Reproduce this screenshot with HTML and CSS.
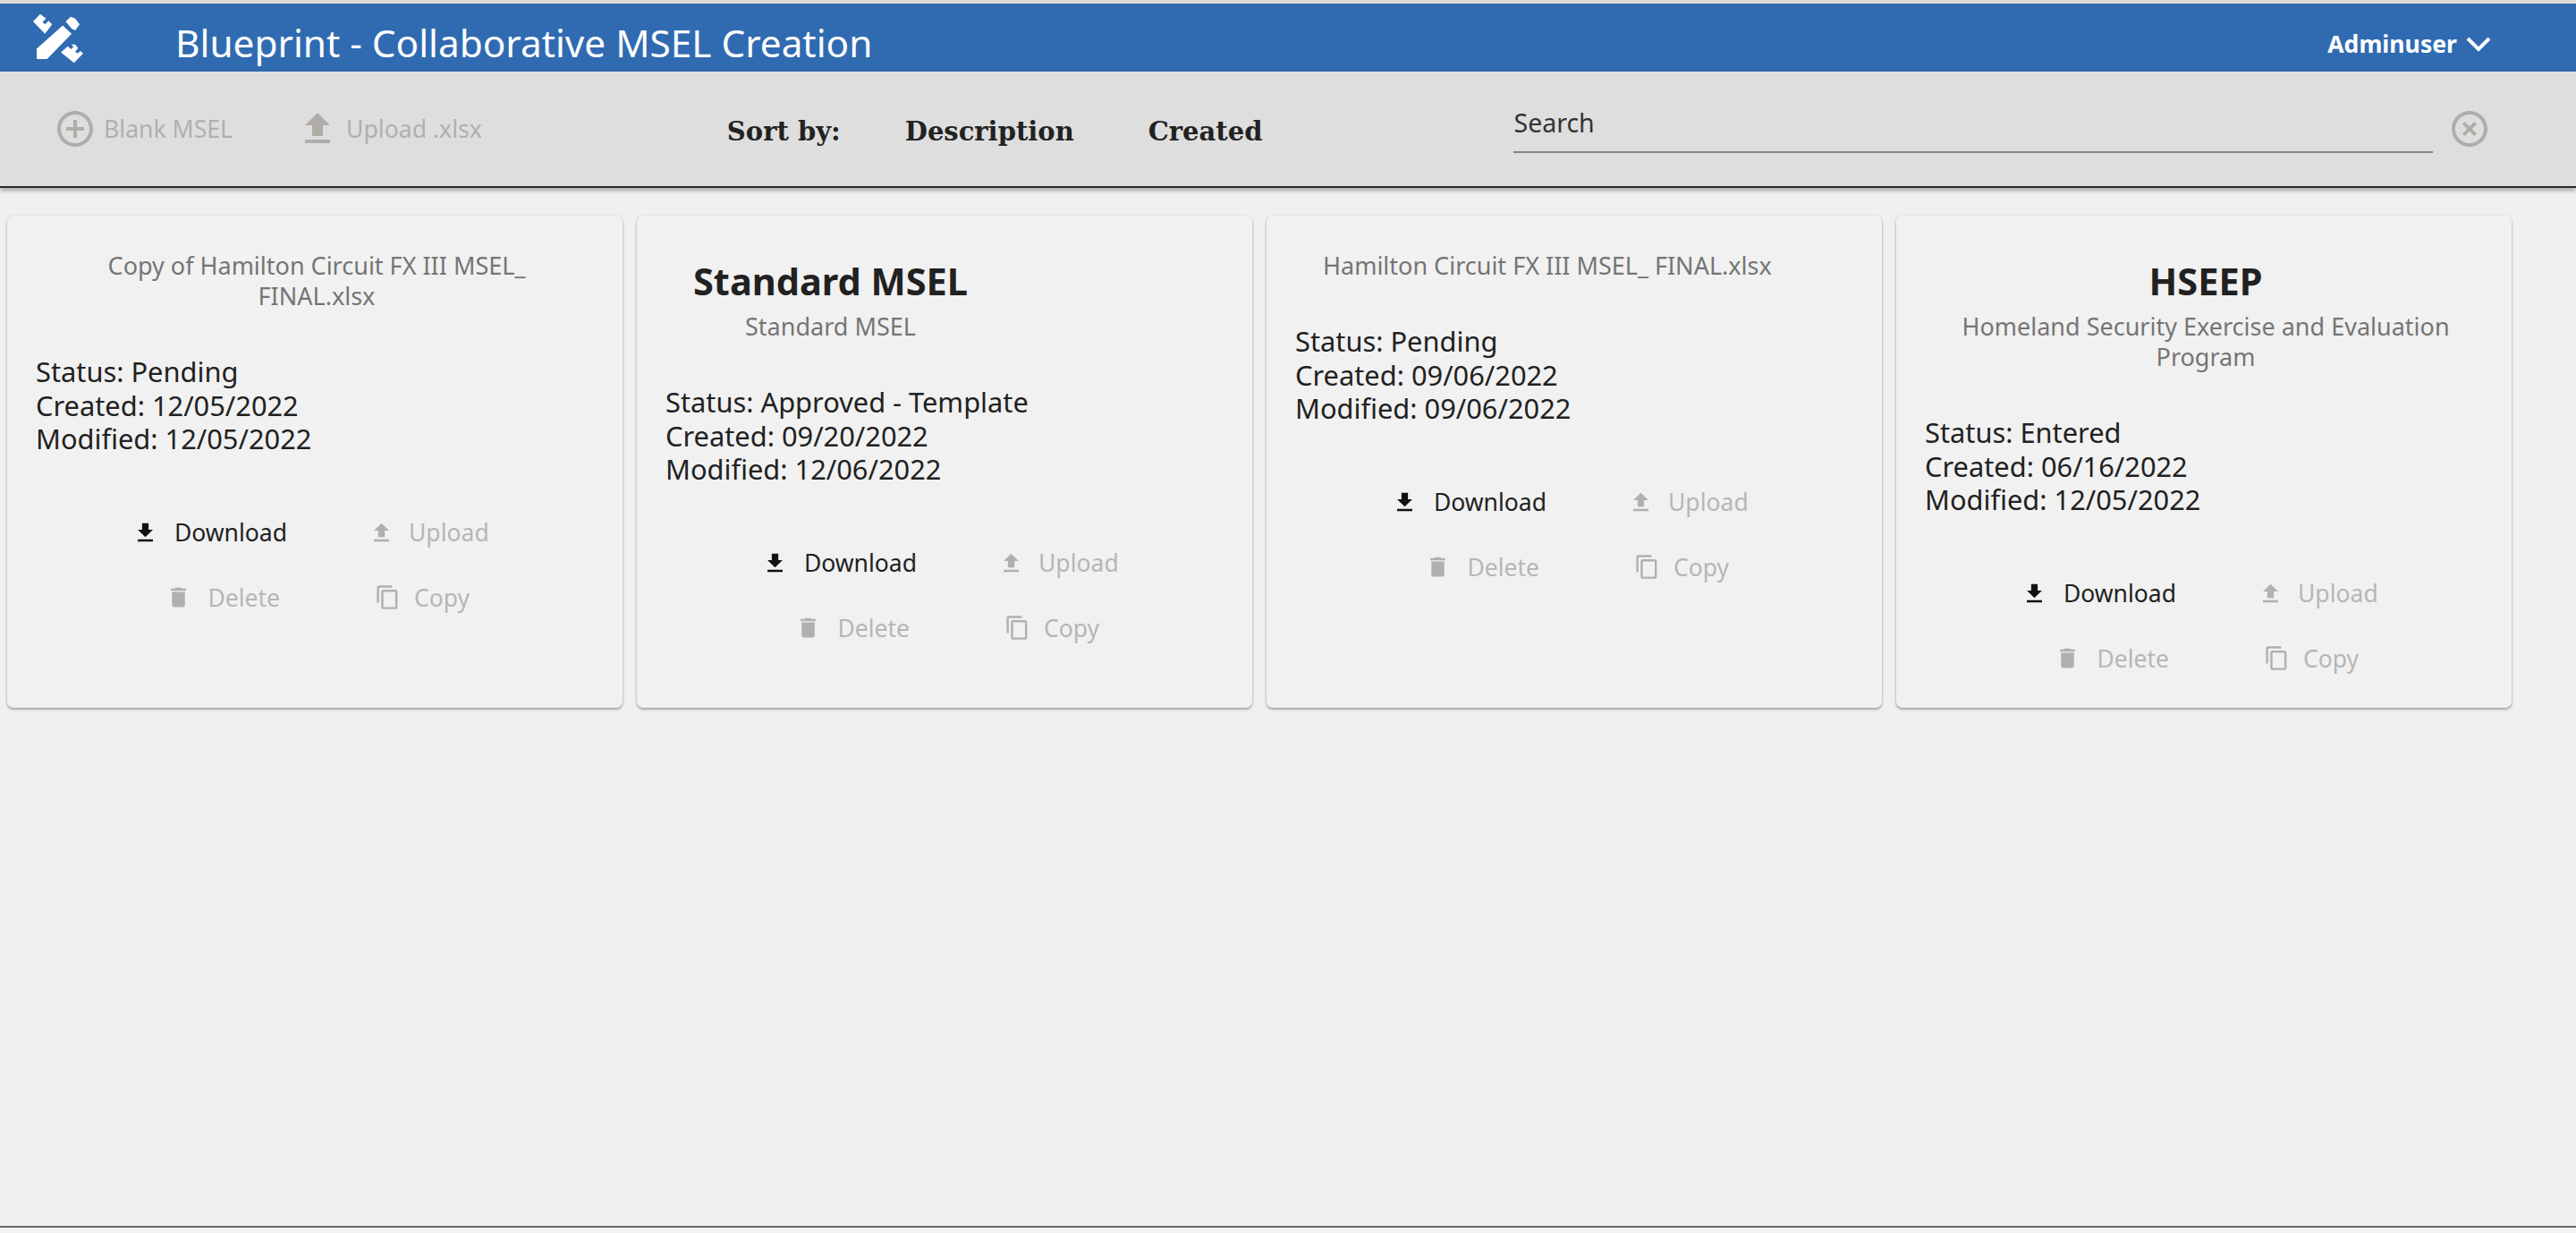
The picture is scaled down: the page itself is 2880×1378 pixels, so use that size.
FILE: index.html
```html
<!DOCTYPE html>
<html lang="en">
<head>
<meta charset="utf-8">
<title>Blueprint - Collaborative MSEL Creation</title>
<link rel="stylesheet" href="styles.css">
</head>
<body>
<div class="page">
  <header class="appbar">
    <svg class="logo" viewBox="45 38 172 172" aria-hidden="true">
      <path d="M48 68 72 43 92 58 80 70 88 78 100 66 112 78 88 110Z"/>
      <path d="M158 68 175 52 190 58 205 78 190 98 178 92Z"/>
      <path d="M60 195 60 160 148 82 178 110 95 195Z"/>
      <path d="M142 172 165 152 176 162 184 154 178 146 190 146 200 158 190 170 198 176 208 168 217 176 186 208Z"/>
    </svg>
    <div class="apptitle">Blueprint - Collaborative MSEL Creation</div>
    <div class="user"><span>Adminuser</span>
      <svg class="chev" viewBox="0 0 28 18" aria-hidden="true"><path d="M2 3 14 15 26 3"/></svg>
    </div>
  </header>
  <div class="toolbar">
    <div class="tool tool-blank">
      <svg class="icon-lg" viewBox="0 0 24 24"><path d="M13 7h-2v4H7v2h4v4h2v-4h4v-2h-4V7zm-1-5C6.48 2 2 6.48 2 12s4.48 10 10 10 10-4.48 10-10S17.52 2 12 2zm0 18c-4.41 0-8-3.59-8-8s3.59-8 8-8 8 3.59 8 8-3.59 8-8 8z"/></svg>
      <span>Blank MSEL</span>
    </div>
    <div class="tool tool-upload">
      <svg class="icon-lg" viewBox="0 0 24 24"><path d="M9 16h6v-6h4l-7-7-7 7h4zm-4 2h14v2H5z"/></svg>
      <span>Upload .xlsx</span>
    </div>
    <div class="sort">
      <span class="sort-label">Sort by:</span>
      <span class="sort-desc">Description</span>
      <span class="sort-created">Created</span>
    </div>
    <div class="search"><span>Search</span></div>
    <svg class="clear" viewBox="0 0 24 24"><path d="M14.59 8L12 10.59 9.41 8 8 9.41 10.59 12 8 14.59 9.41 16 12 13.41 14.59 16 16 14.59 13.41 12 16 9.41 14.59 8zM12 2C6.47 2 2 6.47 2 12s4.47 10 10 10 10-4.47 10-10S17.53 2 12 2zm0 18c-4.41 0-8-3.59-8-8s3.59-8 8-8 8 3.59 8 8-3.59 8-8 8z"/></svg>
  </div>
  <main class="cards">
    <article class="card">
      <div class="head">
        <div class="sub">Copy of Hamilton Circuit FX III MSEL_ FINAL.xlsx</div>
      </div>
      <div class="meta"><div>Status: Pending</div><div>Created: 12/05/2022</div><div>Modified: 12/05/2022</div></div>
      <div class="actions">
        <div class="act act-on"><svg viewBox="0 0 24 24"><path d="M19 9h-4V3H9v6H5l7 7 7-7zM5 18v2h14v-2H5z"/></svg><span>Download</span></div>
        <div class="act act-up"><svg viewBox="0 0 24 24"><path d="M9 16h6v-6h4l-7-7-7 7h4zm-4 2h14v2H5z"/></svg><span>Upload</span></div>
        <div class="act act-del"><svg viewBox="0 0 24 24"><path d="M6 19c0 1.1.9 2 2 2h8c1.1 0 2-.9 2-2V7H6v12zM19 4h-3.5l-1-1h-5l-1 1H5v2h14V4z"/></svg><span>Delete</span></div>
        <div class="act act-copy"><svg viewBox="0 0 24 24"><path d="M16 1H4c-1.1 0-2 .9-2 2v14h2V3h12V1zm3 4H8c-1.1 0-2 .9-2 2v14c0 1.1.9 2 2 2h11c1.1 0 2-.9 2-2V7c0-1.1-.9-2-2-2zm0 16H8V7h11v14z"/></svg><span>Copy</span></div>
      </div>
    </article>
    <article class="card">
      <div class="head">
        <div class="name">Standard MSEL</div>
        <div class="sub">Standard MSEL</div>
      </div>
      <div class="meta"><div>Status: Approved - Template</div><div>Created: 09/20/2022</div><div>Modified: 12/06/2022</div></div>
      <div class="actions">
        <div class="act act-on"><svg viewBox="0 0 24 24"><path d="M19 9h-4V3H9v6H5l7 7 7-7zM5 18v2h14v-2H5z"/></svg><span>Download</span></div>
        <div class="act act-up"><svg viewBox="0 0 24 24"><path d="M9 16h6v-6h4l-7-7-7 7h4zm-4 2h14v2H5z"/></svg><span>Upload</span></div>
        <div class="act act-del"><svg viewBox="0 0 24 24"><path d="M6 19c0 1.1.9 2 2 2h8c1.1 0 2-.9 2-2V7H6v12zM19 4h-3.5l-1-1h-5l-1 1H5v2h14V4z"/></svg><span>Delete</span></div>
        <div class="act act-copy"><svg viewBox="0 0 24 24"><path d="M16 1H4c-1.1 0-2 .9-2 2v14h2V3h12V1zm3 4H8c-1.1 0-2 .9-2 2v14c0 1.1.9 2 2 2h11c1.1 0 2-.9 2-2V7c0-1.1-.9-2-2-2zm0 16H8V7h11v14z"/></svg><span>Copy</span></div>
      </div>
    </article>
    <article class="card">
      <div class="head">
        <div class="sub">Hamilton Circuit FX III MSEL_ FINAL.xlsx</div>
      </div>
      <div class="meta"><div>Status: Pending</div><div>Created: 09/06/2022</div><div>Modified: 09/06/2022</div></div>
      <div class="actions">
        <div class="act act-on"><svg viewBox="0 0 24 24"><path d="M19 9h-4V3H9v6H5l7 7 7-7zM5 18v2h14v-2H5z"/></svg><span>Download</span></div>
        <div class="act act-up"><svg viewBox="0 0 24 24"><path d="M9 16h6v-6h4l-7-7-7 7h4zm-4 2h14v2H5z"/></svg><span>Upload</span></div>
        <div class="act act-del"><svg viewBox="0 0 24 24"><path d="M6 19c0 1.1.9 2 2 2h8c1.1 0 2-.9 2-2V7H6v12zM19 4h-3.5l-1-1h-5l-1 1H5v2h14V4z"/></svg><span>Delete</span></div>
        <div class="act act-copy"><svg viewBox="0 0 24 24"><path d="M16 1H4c-1.1 0-2 .9-2 2v14h2V3h12V1zm3 4H8c-1.1 0-2 .9-2 2v14c0 1.1.9 2 2 2h11c1.1 0 2-.9 2-2V7c0-1.1-.9-2-2-2zm0 16H8V7h11v14z"/></svg><span>Copy</span></div>
      </div>
    </article>
    <article class="card">
      <div class="head">
        <div class="name">HSEEP</div>
        <div class="sub">Homeland Security Exercise and Evaluation Program</div>
      </div>
      <div class="meta"><div>Status: Entered</div><div>Created: 06/16/2022</div><div>Modified: 12/05/2022</div></div>
      <div class="actions">
        <div class="act act-on"><svg viewBox="0 0 24 24"><path d="M19 9h-4V3H9v6H5l7 7 7-7zM5 18v2h14v-2H5z"/></svg><span>Download</span></div>
        <div class="act act-up"><svg viewBox="0 0 24 24"><path d="M9 16h6v-6h4l-7-7-7 7h4zm-4 2h14v2H5z"/></svg><span>Upload</span></div>
        <div class="act act-del"><svg viewBox="0 0 24 24"><path d="M6 19c0 1.1.9 2 2 2h8c1.1 0 2-.9 2-2V7H6v12zM19 4h-3.5l-1-1h-5l-1 1H5v2h14V4z"/></svg><span>Delete</span></div>
        <div class="act act-copy"><svg viewBox="0 0 24 24"><path d="M16 1H4c-1.1 0-2 .9-2 2v14h2V3h12V1zm3 4H8c-1.1 0-2 .9-2 2v14c0 1.1.9 2 2 2h11c1.1 0 2-.9 2-2V7c0-1.1-.9-2-2-2zm0 16H8V7h11v14z"/></svg><span>Copy</span></div>
      </div>
    </article>
  </main>
  <footer class="foot"></footer>
</div>
</body>
</html>
```
FILE: styles.css
```css
* { box-sizing: border-box; }
html, body { margin: 0; height: 100%; }
body { background: #f0f0f0; font-family: "Noto Sans", "Open Sans", sans-serif; color: #212121; overflow: hidden; }
.page { display: flex; flex-direction: column; height: 1378px; border-top: 4px solid #dcd8d2; }

.appbar { height: 76px; flex: none; background: #306bb2; color: #fff; display: flex; align-items: center; padding: 0 95px 0 36px; }
.logo { width: 57px; height: 57px; fill: #fff; flex: none; }
.apptitle { font-size: 42.3px; margin-left: 103px; padding-top: 10px; flex: 1; white-space: nowrap; }
.user { display: flex; align-items: center; font-size: 26.6px; font-weight: 700; gap: 10px; padding-top: 13px; }
.chev { width: 28px; height: 18px; fill: none; stroke: #fff; stroke-width: 4; }

.toolbar { height: 130px; flex: none; background: #dedede; border-bottom: 2px solid #2b2b2b; box-shadow: 0 3px 5px rgba(0,0,0,.3); display: flex; align-items: center; position: relative; padding-left: 60px; color: #b0b0b0; }
.tool { display: flex; align-items: center; font-size: 26.6px; white-space: nowrap; }
.tool svg { fill: #b0ada9; }
.icon-lg { width: 48px; height: 48px; flex: none; }
.tool-blank { gap: 8px; }
.tool-upload { gap: 8px; margin-left: 71px; }
.sort { display: flex; align-items: center; font-family: "DejaVu Serif", serif; font-weight: 700; font-size: 29px; color: #222; margin-left: 274px; white-space: nowrap; padding-top: 6px; }
.sort-desc { margin-left: 72px; }
.sort-created { margin-left: 83px; }
.search { width: 1028px; height: 62px; margin-left: 281px; border-bottom: 2px solid #858585; color: #333; font-size: 28.5px; line-height: 56px; margin-top: -8px; }
.clear { width: 48px; height: 48px; fill: #b0ada9; margin-left: 17px; flex: none; }

.cards { flex: 1; display: grid; grid-template-columns: repeat(4, 688px); column-gap: 16px; align-items: start; padding: 31px 8px 0; }
.card { height: 550px; background: #f1f1f1; border-radius: 7px; box-shadow: 0 2px 3px rgba(0,0,0,.3), 0 0 3px rgba(0,0,0,.1); padding-top: 39px; }
.head { width: fit-content; max-width: 566px; margin-left: 63px; text-align: center; }
.name { font-size: 41.5px; font-weight: 700; line-height: 68px; color: #212121; }
.sub { font-size: 27px; line-height: 34px; color: #757575; }
.meta { margin: 49px 0 0 32px; font-size: 30.8px; line-height: 37.6px; }
.actions { display: grid; grid-template-columns: 313px auto; column-gap: 91px; justify-content: start; margin-top: 49px; }
.act { height: 72.5px; display: flex; align-items: center; gap: 18px; font-size: 26.5px; color: #b6b6b6; }
.act svg { width: 29px; height: 29px; fill: #b0b0b0; flex: none; }
.act-on { justify-content: flex-end; color: #212121; }
.act-on svg { fill: #111; }
.act-up { gap: 16px; }
.act-del { justify-content: flex-end; padding-right: 8px; }
.act-copy { padding-left: 7px; gap: 15px; }

.foot { height: 8px; flex: none; background: #f3f2f0; border-top: 2px solid #666; }
```
